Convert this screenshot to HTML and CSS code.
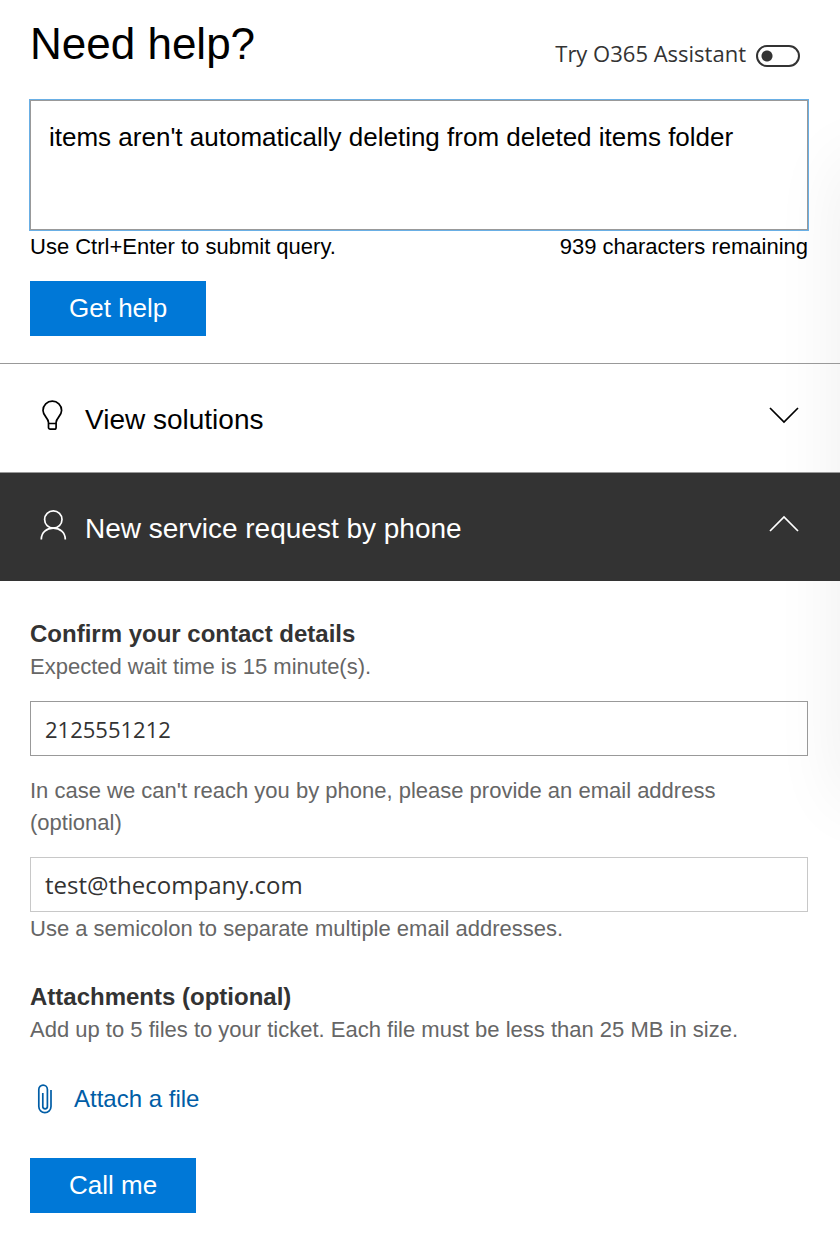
FILE: index.html
```
<!DOCTYPE html>
<html lang="en">
<head>
    <meta charset="UTF-8">
    <meta name="viewport" content="width=device-width, initial-scale=1.0">
    <title>Need help?</title>
    <link rel="stylesheet" href="styles.css">
</head>
<body>
    <main class="help-panel">
        <form class="query">
            <div class="query-header">
                <h1><label for="query">Need help?</label></h1>
                <div class="assistant">
                    <label for="assistant">Try O365 Assistant</label>
                    <input type="checkbox" role="switch" id="assistant" class="toggle">
                </div>
            </div>
            <textarea id="query" class="query-box" maxlength="1000">items aren't automatically deleting from deleted items folder</textarea>
            <div class="query-notes">
                <span>Use Ctrl+Enter to submit query.</span>
                <span>939 characters remaining</span>
            </div>
            <button type="button" class="primary-btn">Get help</button>
        </form>

        <button type="button" class="section-btn" aria-expanded="false">
            <svg class="icon" viewBox="0 0 32 32" aria-hidden="true">
                <path d="M12.500 26v-2.500c0-4.500-5.500-6.500-5.500-12a9.300 9.300 0 0 1 18.600 0c0 5.500-5.500 7.500-5.500 12v5a1.700 1.700 0 0 1-1.700 1.700h-4.200a1.700 1.700 0 0 1-1.700-1.700v-3zM12.500 24.500h7.600"/>
            </svg>
            <span class="section-title">View solutions</span>
            <svg class="icon" viewBox="0 0 32 32" aria-hidden="true">
                <path d="M2 9l14 14L30 9"/>
            </svg>
        </button>

        <button type="button" class="section-btn open" aria-expanded="true" aria-controls="request">
            <svg class="icon" viewBox="0 0 32 32" aria-hidden="true">
                <circle cx="17.300" cy="11.500" r="8.700"/>
                <path d="M5.300 31.500c0-7 5.400-11.300 12-11.300s12 4.300 12 11.300"/>
            </svg>
            <span class="section-title">New service request by phone</span>
            <svg class="icon" viewBox="0 0 32 32" aria-hidden="true">
                <path d="M2 23L16 9l14 14"/>
            </svg>
        </button>

        <form class="request" id="request">
            <h2>Confirm your contact details</h2>
            <label for="phone">Expected wait time is 15 minute(s).</label>
            <input type="tel" id="phone" class="field phone" value="2125551212">
            <label for="email">In case we can't reach you by phone, please provide an email address (optional)</label>
            <input type="text" id="email" class="field" value="test@thecompany.com" aria-describedby="email-note">
            <p id="email-note">Use a semicolon to separate multiple email addresses.</p>

            <h2 class="attachments">Attachments (optional)</h2>
            <p>Add up to 5 files to your ticket. Each file must be less than 25 MB in size.</p>
            <a href="#" class="attach-link">
                <svg class="clip" viewBox="0 0 16 32" aria-hidden="true">
                    <path d="M14 7v16.500a6.100 6.100 0 0 1-12.200 0V6.500a4.300 4.300 0 0 1 8.600 0v17a2.300 2.300 0 0 1-4.600 0V10"/>
                </svg>
                Attach a file
            </a>
            <button type="button" class="primary-btn">Call me</button>
        </form>
    </main>
</body>
</html>
```
FILE: styles.css
```
* {
    box-sizing: border-box;
}
body {
    margin: 0;
    background-color: #fff;
    color: #000;
    font-family: "Liberation Sans", Arial, sans-serif;
    font-size: 22px;
    line-height: 32px;
}
h1, h2, p {
    margin: 0;
}
.help-panel {
    position: relative;
    z-index: 0;
    overflow: hidden;
    min-height: 100vh;
}
/* soft shadow along the right edge */
.help-panel::after {
    content: "";
    position: absolute;
    z-index: -1;
    top: 160px;
    left: 100%;
    width: 60px;
    height: 640px;
    box-shadow: 0 0 70px rgba(0, 0, 0, 0.07);
}
.query {
    padding: 16px 32px 27px 30px;
}
.query-header {
    display: flex;
    justify-content: space-between;
    align-items: flex-end;
    margin-bottom: 28px;
}
h1 {
    font-size: 44px;
    font-weight: normal;
    line-height: 56px;
}
.assistant {
    display: flex;
    align-items: center;
    gap: 10px;
    margin: 0 8px 3px 0;
    color: #333;
    font-family: "Open Sans", "Noto Sans", sans-serif;
}
.toggle {
    appearance: none;
    width: 44px;
    height: 22px;
    margin: 6px 0 0;
    border: 2px solid #333;
    border-radius: 11px;
    background: radial-gradient(circle at 9px 9px, #333 5px, transparent 6px);
}
.query-box {
    display: block;
    width: 100%;
    height: 130px;
    padding: 20px 18px;
    border: 1px solid #999;
    box-shadow: 0 0 0 1px #69afe5;
    background: transparent;
    color: #000;
    font-family: inherit;
    font-size: 26px;
    line-height: 32px;
    resize: none;
    outline: none;
}
.query-notes {
    display: flex;
    justify-content: space-between;
    margin: 1px 0 18px;
}
.primary-btn {
    height: 55px;
    padding: 0 39px;
    border: none;
    background-color: #0078d7;
    color: #fff;
    font-family: inherit;
    font-size: 26px;
    cursor: pointer;
}
.section-btn {
    display: flex;
    align-items: center;
    width: 100%;
    height: 109px;
    padding: 4px 40px 0 36px;
    border: none;
    border-top: 1px solid #999;
    background: transparent;
    color: #000;
    font-family: inherit;
    font-size: 28px;
    line-height: 32px;
    text-align: left;
    cursor: pointer;
}
.section-btn.open {
    background-color: #333;
    color: #fff;
}
.section-title {
    flex: 1;
    margin-left: 17px;
}
.icon {
    width: 32px;
    height: 32px;
    margin-bottom: 10px;
    fill: none;
    stroke: currentColor;
    stroke-width: 1.7;
}
.request {
    padding: 36px 32px 24px 30px;
    color: #666;
}
.request label {
    display: block;
}
h2 {
    color: #333;
    font-size: 24px;
    line-height: 34px;
}
.field {
    display: block;
    width: 100%;
    height: 55px;
    margin-top: 18px;
    padding: 0 14px;
    border: 1px solid #c8c8c8;
    background: transparent;
    color: #333;
    font-family: "Open Sans", "Noto Sans", sans-serif;
    font-size: 24px;
}
.phone {
    margin-bottom: 19px;
    border-color: #999;
    font-size: 22px;
}
#email-note {
    margin-top: 1px;
}
.attachments {
    margin-top: 35px;
}
.attach-link {
    display: flex;
    align-items: center;
    gap: 21px;
    width: fit-content;
    margin: 37px 0 43px 7px;
    color: #005da6;
    font-size: 24px;
    text-decoration: none;
}
.clip {
    width: 16px;
    height: 32px;
    fill: none;
    stroke: currentColor;
    stroke-width: 1.7;
}
```
